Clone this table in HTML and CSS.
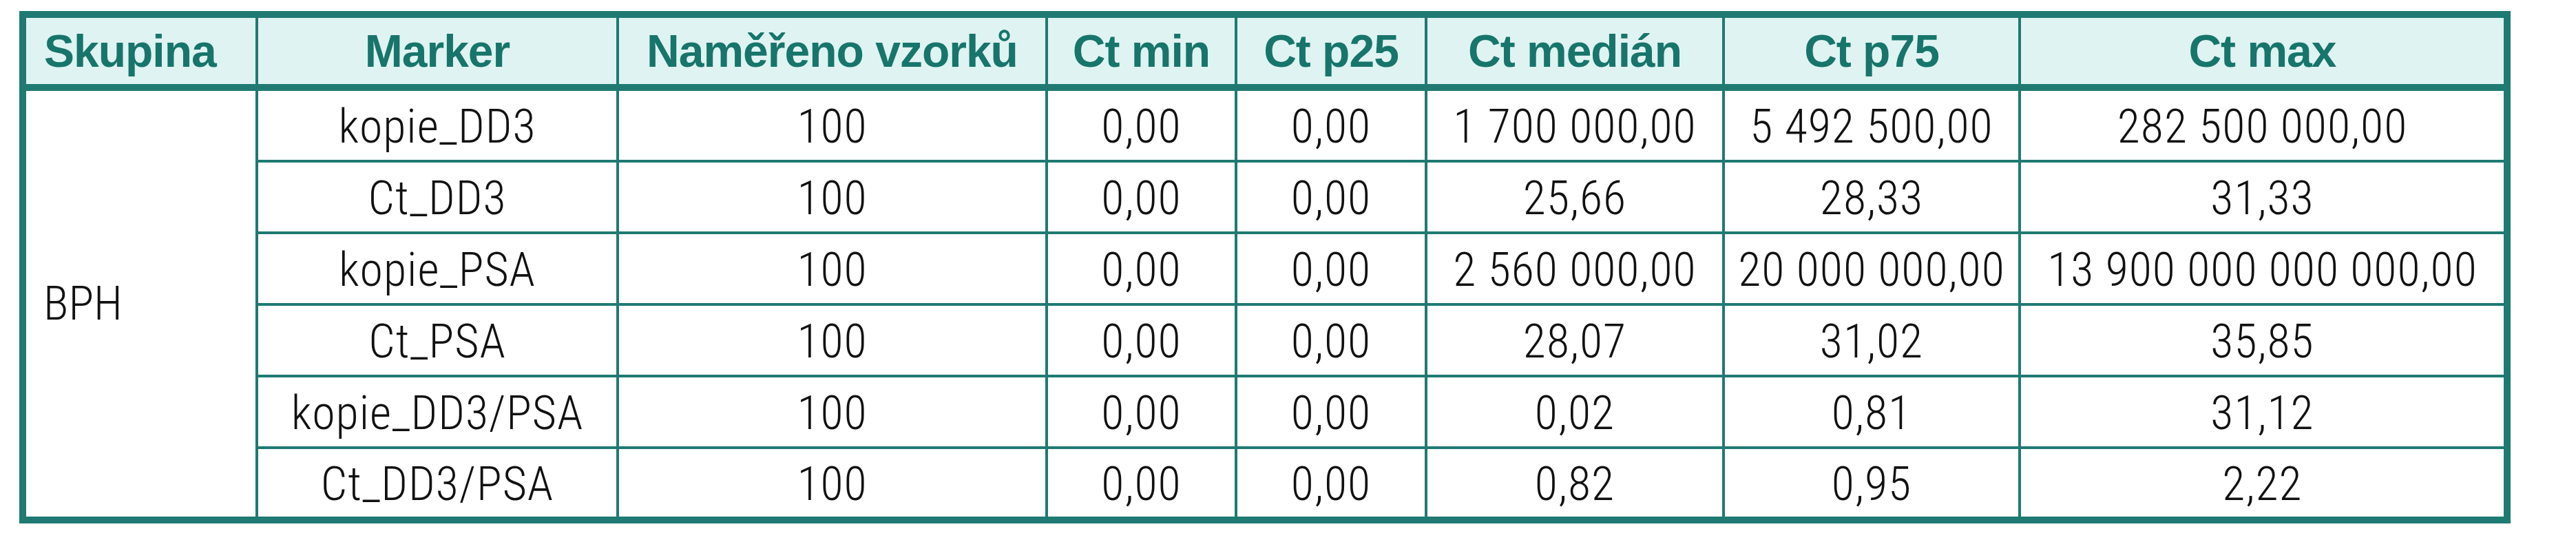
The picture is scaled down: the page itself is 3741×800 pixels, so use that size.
FILE: index.html
```html
<!DOCTYPE html>
<html lang="cs">
<head>
<meta charset="utf-8">
<title>Tabulka</title>
<link rel="stylesheet" href="styles.css">
</head>
<body>
<table class="data">
  <thead>
    <tr>
      <th class="left">Skupina</th>
      <th>Marker</th>
      <th>Naměřeno vzorků</th>
      <th>Ct min</th>
      <th>Ct p25</th>
      <th>Ct medián</th>
      <th>Ct p75</th>
      <th>Ct max</th>
    </tr>
  </thead>
  <tbody>
    <tr>
      <td class="group" rowspan="6">BPH</td>
      <td>kopie_DD3</td><td>100</td><td>0,00</td><td>0,00</td><td>1 700 000,00</td><td>5 492 500,00</td><td>282 500 000,00</td>
    </tr>
    <tr>
      <td>Ct_DD3</td><td>100</td><td>0,00</td><td>0,00</td><td>25,66</td><td>28,33</td><td>31,33</td>
    </tr>
    <tr>
      <td>kopie_PSA</td><td>100</td><td>0,00</td><td>0,00</td><td>2 560 000,00</td><td>20 000 000,00</td><td>13 900 000 000 000,00</td>
    </tr>
    <tr>
      <td>Ct_PSA</td><td>100</td><td>0,00</td><td>0,00</td><td>28,07</td><td>31,02</td><td>35,85</td>
    </tr>
    <tr>
      <td>kopie_DD3/PSA</td><td>100</td><td>0,00</td><td>0,00</td><td>0,02</td><td>0,81</td><td>31,12</td>
    </tr>
    <tr class="last">
      <td>Ct_DD3/PSA</td><td>100</td><td>0,00</td><td>0,00</td><td>0,82</td><td>0,95</td><td>2,22</td>
    </tr>
  </tbody>
</table>
</body>
</html>
```
FILE: styles.css
```css
html, body {
  margin: 0;
  padding: 0;
  background: #ffffff;
}

body {
  padding: 16px 0 0 28px;
  font-family: "Liberation Sans", Arial, sans-serif;
}

.data {
  border-collapse: separate;
  border-spacing: 0;
  table-layout: fixed;
  width: 3618px;
  border: 10px solid #1f7a72;
}

.data th,
.data td {
  box-sizing: border-box;
  padding: 0;
  text-align: center;
  vertical-align: middle;
  white-space: nowrap;
  border-right: 4px solid #1f7a72;
}

.data th:last-child,
.data td:last-child {
  border-right: 0;
}

.data thead tr {
  height: 106px;
}

.data th {
  background: #dff3f2;
  color: #17756b;
  font-weight: bold;
  font-size: 66px;
  letter-spacing: -1px;
  border-bottom: 10px solid #1f7a72;
}

.data th:nth-child(1) { width: 337px; }
.data th:nth-child(2) { width: 524px; }
.data th:nth-child(3) { width: 623px; }
.data th:nth-child(4) { width: 275px; }
.data th:nth-child(5) { width: 276px; }
.data th:nth-child(6) { width: 432px; }
.data th:nth-child(7) { width: 430px; }
.data th:nth-child(8) { width: 701px; }

.data th.left {
  text-align: left;
  padding-left: 26px;
}

.data tbody tr {
  height: 104px;
}

.data tbody tr.last {
  height: 98px;
}

.data td {
  font-family: "Roboto Condensed", "Liberation Sans", Arial, sans-serif;
  font-weight: 300;
  font-size: 68px;
  letter-spacing: 1px;
  color: #111111;
  padding-top: 3px;
  border-bottom: 4px solid #1f7a72;
  background: #ffffff;
}

.data tr.last td,
.data td.group {
  border-bottom: 0;
}

.data td.group {
  text-align: left;
  padding-left: 25px;
  padding-top: 0;
  letter-spacing: 0;
}
```
